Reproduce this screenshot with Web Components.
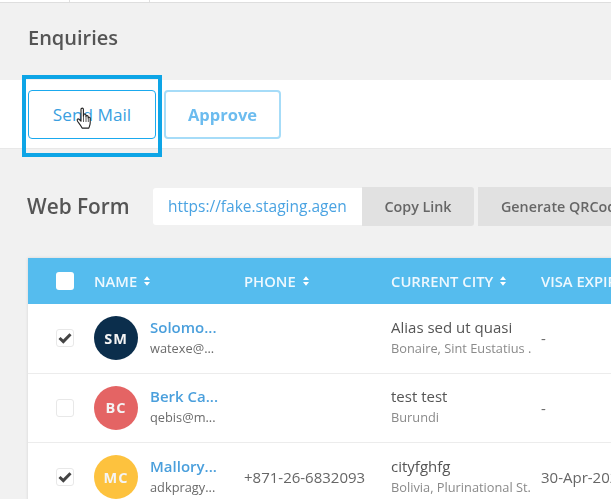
<!DOCTYPE html>
<html><head><meta charset="utf-8"><style>
html,body{margin:0;padding:0;width:611px;height:499px;overflow:hidden;background:#f1f1f1;font-family:"Open Sans",sans-serif}
</style></head><body>
<app-page></app-page>
<template id="t-row">
<style>
:host{display:grid;grid-template-columns:66px 150px 147px 150px 1fr;height:69.500px;box-sizing:border-box;border-bottom:1px solid #ececec;background:#fff;align-items:center;filter:blur(.5px)}
.chk{justify-self:start;margin-left:28px;width:18px;height:18px;box-sizing:border-box;border:1px solid #e8e8e8;border-radius:3px;background:#fff;display:flex;align-items:center;justify-content:center}
.person{display:flex;align-items:center;gap:12px}
.av{width:44px;height:44px;border-radius:50%;display:flex;align-items:center;justify-content:center;color:#f4f4f4;font-weight:700;font-size:14.500px;letter-spacing:1px;flex:none}
.txt{padding-bottom:3px}
.n{font-size:15px;font-weight:600;color:#4a9fdc;line-height:20px;white-space:nowrap}
.e{font-size:12.800px;color:#6b6b6b;line-height:18px;margin-top:2px;white-space:nowrap}
.ph{font-size:15px;color:#666;white-space:nowrap}
.c1{font-size:15px;color:#555;line-height:20px;white-space:nowrap}
.c2{font-size:12.800px;color:#8a8a8a;line-height:18px;margin-top:2px;white-space:nowrap}
.v{font-size:15px;color:#666;white-space:nowrap}
</style>
<div class="chk"><svg id="tick" width="14" height="12" viewBox="0 0 14 12"><path d="M1.500 6 5.300 9.600 12.500 2.200" fill="none" stroke="#444" stroke-width="3"/></svg></div>
<div class="person"><div class="av" id="av"></div><div class="txt"><div class="n" id="n"></div><div class="e" id="e"></div></div></div>
<div class="ph" id="ph"></div>
<div class="txt"><div class="c1" id="c1"></div><div class="c2" id="c2"></div></div>
<div class="v" id="v"></div>
</template>
<script>
class BaseEl extends HTMLElement{
  render(html){this.attachShadow({mode:'open'}).innerHTML=html;}
}
const sortIcon='<svg width="6" height="10" viewBox="0 0 7 11"><path d="M3.500 0 7 4.300H0zM3.500 11 0 6.700h7z" fill="#fff"/></svg>';
class TopBar extends BaseEl{connectedCallback(){this.render(`<style>
:host{display:flex;height:2px;background:#fff;border-bottom:1px solid #dedede}
i{display:block;width:1px;background:#e0e0e0}
.a{margin-left:69px}.b{margin-left:79px}
</style><i class="a"></i><i class="b"></i>`)}}
class PageHead extends BaseEl{connectedCallback(){this.render(`<style>
:host{display:flex;align-items:center;height:77px;padding:0 28px 8px;box-sizing:border-box;font-size:20px;font-weight:600;color:#555;background:#f1f1f1}
span{filter:blur(.3px)}
</style><span><slot></slot></span>`)}}
class ActionBar extends BaseEl{connectedCallback(){this.render(`<style>
:host{display:flex;align-items:center;gap:8px;height:69px;padding:0 28px;box-sizing:border-box;background:#fff;border-bottom:1px solid #e8e8e8;position:relative}
.focus{position:absolute;left:22px;top:-5px;width:140px;height:82px;box-sizing:border-box;border:4px solid #0ea5e6;pointer-events:none}
.cursor{position:absolute;left:76px;top:27px}
</style><slot></slot><div class="focus"></div>
<svg class="cursor" width="18" height="24" viewBox="0 0 18 24"><path d="M5 2.200c0-1.500 2.400-1.500 2.400 0v7l.3-1.400c.3-1.200 2.200-1 2.200.3l.1 1.300c.3-1.100 2.100-1 2.200.3v1.200c.4-1 2-.8 2 .4v4.800c0 2-.8 3.300-1.400 5H6.100c-.9-2-2-3.400-3.700-5.600-.8-1.100-1.700-2.600-.9-3.300.8-.7 2-.1 3.500 2z" fill="#fff" stroke="#222" stroke-width="1.100" stroke-linejoin="round"/><path d="M7.500 9v6M10 9.500V15M12.300 10.500V15" stroke="#333" stroke-width=".8"/></svg>`)}}
class OutBtn extends BaseEl{connectedCallback(){const s=this.hasAttribute('soft');this.render(`<style>
:host{display:flex;align-items:center;justify-content:center;box-sizing:border-box;height:49px;width:${s?'117px':'128px'};border:${s?'2px solid #a6dcf8':'1px solid #1aa9ee'};border-radius:4px;background:#fff;color:${s?'#6cbcef':'#3a9fe0'};font-size:${s?'16.5px':'17.2px'};font-weight:${s?700:500};${s?'filter:blur(.6px);':''}}
</style><slot></slot>`)}}
class FormRow extends BaseEl{connectedCallback(){this.render(`<style>
:host{display:flex;align-items:center;height:40px;margin:37px 0 32px;padding-left:27px;filter:blur(.55px);white-space:nowrap}
h2{margin:0 24px 0 0;font-size:20.800px;font-weight:600;color:#555;width:102px}
.url{width:209px;height:37px;box-sizing:border-box;background:#fff;border-radius:3px 0 0 3px;padding:0 16px 0 15px;font-size:15.500px;line-height:37px;color:#4aa3e2;flex:none}
.url div{overflow:hidden}
.btn{height:39px;background:#e1e1e1;color:#666;font-size:14.300px;font-weight:600;display:flex;align-items:center;justify-content:center;flex:none}
.copy{width:112px;margin-right:4px;border-radius:0 3px 3px 0}
.gen{width:133px;padding-left:23px;justify-content:flex-start;box-sizing:border-box}
</style><h2>Web Form</h2><div class="url"><div>https://fake.staging.agen</div></div><div class="btn copy">Copy Link</div><div class="btn gen">Generate QRCode</div>`)}}
class DataTable extends BaseEl{connectedCallback(){this.render(`<style>
:host{display:block;margin-left:28px;width:640px;box-shadow:0 0 3px rgba(0,0,0,.12);background:#fff}
.head{display:grid;grid-template-columns:66px 150px 147px 150px 1fr;height:46px;background:#55bcee;align-items:center;color:#eef8fe;font-size:14.800px;font-weight:600;filter:blur(.5px);white-space:nowrap}
.box{margin-left:28px;width:18px;height:18px;background:#fff;border-radius:3px}
.head span{display:flex;align-items:center;gap:7px}
</style><div class="head"><div class="box"></div><span>NAME ${sortIcon}</span><span>PHONE ${sortIcon}</span><span>CURRENT CITY ${sortIcon}</span><span>VISA EXPIRY ${sortIcon}</span></div><slot></slot>`)}}
class DataRow extends HTMLElement{connectedCallback(){
  const r=this.attachShadow({mode:'open'});r.append(document.getElementById('t-row').content.cloneNode(true));
  const g=k=>this.getAttribute(k)||'';
  const q=i=>r.getElementById(i);
  q('av').textContent=g('i');q('av').style.background=g('col');
  ['n','e','ph','c1','c2','v'].forEach(k=>q(k).textContent=g(k));
  if(!this.hasAttribute('on'))q('tick').remove();
}}
class AppPage extends BaseEl{connectedCallback(){this.render(`<style>:host{display:block}</style>
<top-bar></top-bar><page-head>Enquiries</page-head>
<action-bar><out-btn>Send Mail</out-btn><out-btn soft>Approve</out-btn></action-bar>
<form-row></form-row>
<data-table>
<data-row on i="SM" col="#0b2e4c" n="Solomo..." e="watexe@..." ph="" c1="Alias sed ut quasi" c2="Bonaire, Sint Eustatius ." v="-"></data-row>
<data-row i="BC" col="#e46464" n="Berk Ca..." e="qebis@m..." ph="" c1="test test" c2="Burundi" v="-"></data-row>
<data-row on i="MC" col="#fdc23e" n="Mallory..." e="adkpragy..." ph="+871-26-6832093" c1="cityfghfg" c2="Bolivia, Plurinational St." v="30-Apr-2021"></data-row>
</data-table>`)}}
customElements.define('top-bar',TopBar);customElements.define('page-head',PageHead);customElements.define('action-bar',ActionBar);customElements.define('out-btn',OutBtn);customElements.define('form-row',FormRow);customElements.define('data-table',DataTable);customElements.define('data-row',DataRow);customElements.define('app-page',AppPage);
</script></body></html>
